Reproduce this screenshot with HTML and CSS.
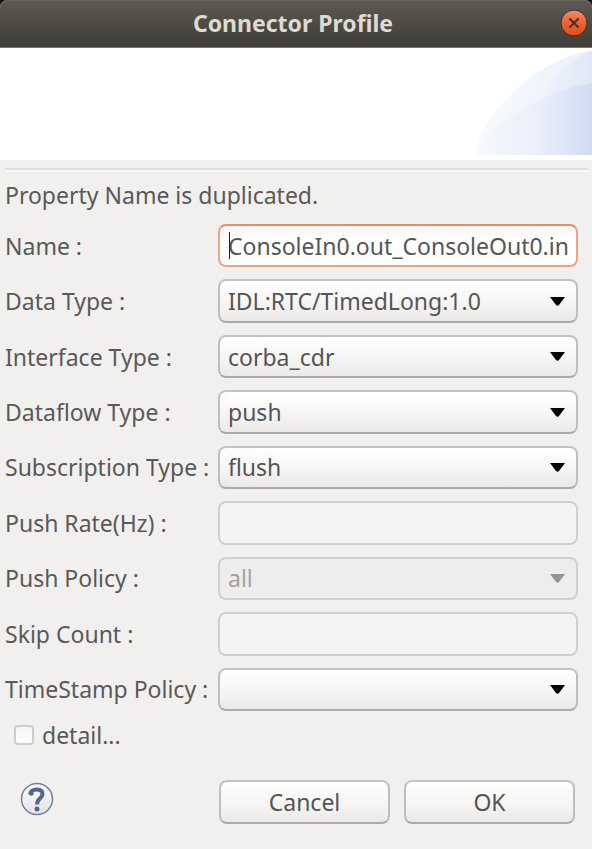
FILE: index.html
```html
<!DOCTYPE html>
<html lang="en">
<head>
<meta charset="utf-8">
<meta name="viewport" content="width=device-width, initial-scale=1">
<title>Connector Profile</title>
<link rel="stylesheet" href="styles.css">
</head>
<body>
<main class="dialog">
  <header class="titlebar">
    <h1 class="title">Connector Profile</h1>
    <button class="close" type="button" aria-label="Close">
      <svg viewBox="0 0 28 28" width="28" height="28" aria-hidden="true">
        <defs>
          <linearGradient id="closeFill" x1="0" y1="0" x2="0" y2="1">
            <stop offset="0" stop-color="#f58a68"/>
            <stop offset="0.5" stop-color="#ee6236"/>
            <stop offset="1" stop-color="#df4c18"/>
          </linearGradient>
        </defs>
        <circle cx="14" cy="14" r="13" fill="url(#closeFill)" stroke="#37332d" stroke-width="1"/>
        <path d="M9.5 9.5L18.5 18.5M18.5 9.5L9.5 18.5" stroke="#4b3218" stroke-width="2" fill="none"/>
      </svg>
    </button>
  </header>
  <div class="banner">
    <svg class="banner-art" viewBox="0 0 116 107" width="116" height="107" aria-hidden="true">
      <defs>
        <linearGradient id="outer" x1="0" y1="0" x2="1" y2="0">
          <stop offset="0" stop-color="#f8fbfd"/>
          <stop offset="1" stop-color="#ebf0fb"/>
        </linearGradient>
        <linearGradient id="wedge" x1="0" y1="0" x2="1" y2="0">
          <stop offset="0" stop-color="#f0f4fc"/>
          <stop offset="1" stop-color="#dfe7f7"/>
        </linearGradient>
        <linearGradient id="inner" x1="0" y1="0" x2="1" y2="0">
          <stop offset="0" stop-color="#f7fafd"/>
          <stop offset="0.55" stop-color="#e9eefa"/>
          <stop offset="1" stop-color="#d1dcf3"/>
        </linearGradient>
      </defs>
      <path d="M0 107C1 82 20 60 44 38C65 20 90 6 116 2V107Z" fill="url(#outer)"/>
      <path d="M62 52C78 30 94 10 116 3V40Z" fill="url(#wedge)"/>
      <path d="M0 107C2 93 12 84 26 75C52 57 82 40 116 35V107Z" fill="url(#inner)"/>
    </svg>
  </div>
  <hr class="separator">
  <p class="message">Property Name is duplicated.</p>
  <form class="form">
    <div class="fields">
      <label for="name">Name :</label>
      <div class="name-field">
        <input class="control focused" id="name" type="text" value="ConsoleIn0.out_ConsoleOut0.in">
        <span class="caret"></span>
      </div>
      <label for="data-type">Data Type :</label>
      <select class="control" id="data-type"><option>IDL:RTC/TimedLong:1.0</option></select>
      <label for="interface-type">Interface Type :</label>
      <select class="control" id="interface-type"><option>corba_cdr</option></select>
      <label for="dataflow-type">Dataflow Type :</label>
      <select class="control" id="dataflow-type"><option>push</option></select>
      <label for="subscription-type">Subscription Type :</label>
      <select class="control" id="subscription-type"><option>flush</option></select>
      <label for="push-rate">Push Rate(Hz) :</label>
      <input class="control" id="push-rate" type="text" disabled>
      <label for="push-policy">Push Policy :</label>
      <select class="control" id="push-policy" disabled><option>all</option></select>
      <label for="skip-count">Skip Count :</label>
      <input class="control" id="skip-count" type="text" disabled>
      <label for="timestamp-policy">TimeStamp Policy :</label>
      <select class="control" id="timestamp-policy"><option></option></select>
    </div>
    <div class="detail">
      <input class="check" id="detail" type="checkbox">
      <label for="detail">detail...</label>
    </div>
    <div class="actions">
      <button class="help" type="button" aria-label="Help">
        <svg viewBox="0 0 34 34" width="34" height="34" aria-hidden="true">
          <defs>
            <linearGradient id="helpFill" x1="0" y1="0" x2="0" y2="1">
              <stop offset="0" stop-color="#fbfbfb"/>
              <stop offset="1" stop-color="#e3e3e3"/>
            </linearGradient>
          </defs>
          <circle cx="17" cy="17" r="15.5" fill="url(#helpFill)" stroke="#70809f" stroke-width="1.5"/>
          <path d="M10 12.500C10.500 8.500 13 7.500 17 7.500C21 7.500 22.500 9.500 22.500 12C22.500 16.500 17 16 17 22.500" fill="none" stroke="#53678f" stroke-width="4"/>
          <circle cx="11.500" cy="11.500" r="2.200" fill="#53678f"/>
          <circle cx="17" cy="27" r="2.500" fill="#53678f"/>
        </svg>
      </button>
      <button class="push" type="button">Cancel</button>
      <button class="push" type="submit">OK</button>
    </div>
  </form>
</main>
</body>
</html>
```
FILE: styles.css
```css
* {
  box-sizing: border-box;
}

body {
  margin: 0;
  background: #15130f;
  color: #595959;
  font: 23px/30px "Noto Sans", sans-serif;
}

.dialog {
  display: flex;
  flex-direction: column;
  min-height: 100vh;
  background: #f1f0ee;
  border-radius: 8px 8px 0 0;
}

.titlebar {
  display: grid;
  grid-template-columns: 22px 1fr 28px;
  align-items: center;
  height: 48px;
  padding: 0 4px 2px;
  border-bottom: 1px solid #77756f;
  border-radius: 8px 8px 0 0;
  background: linear-gradient(#5d5a52, #3d3c37);
  box-shadow: inset 0 1px #69665d;
}

.title {
  grid-column: 2;
  margin: 0;
  color: #dfdbd2;
  font-size: 23px;
  font-weight: 700;
  text-align: center;
}

.close,
.help {
  display: block;
  padding: 0;
  border: 0;
  background: none;
}

.close svg,
.help svg {
  display: block;
}

.banner {
  display: flex;
  justify-content: flex-end;
  height: 112px;
  background: #fff;
}

.separator {
  align-self: stretch;
  height: 4px;
  margin: 8px 4px 0 5px;
  border: 0;
  border-top: 2px solid #e0dfdd;
  border-bottom: 2px solid #f9f9f8;
}

.message {
  margin: 8px 5px 0;
}

.form {
  display: flex;
  flex: 1;
  flex-direction: column;
  margin-top: 14px;
}

.fields {
  display: grid;
  flex: 1;
  grid-template-columns: 204px 1fr;
  grid-auto-rows: 1fr;
  gap: 12px 9px;
  align-items: center;
  padding: 0 14px 0 5px;
}

.fields label {
  white-space: nowrap;
}

.name-field {
  position: relative;
  height: 100%;
}

.control {
  display: block;
  width: 100%;
  height: 100%;
  min-height: 43px;
  min-width: 0;
  margin: 0;
  padding: 0 8px;
  border: 2px solid #b9b8b5;
  border-radius: 8px;
  outline: 0;
  background: linear-gradient(#fff, #f6f5f4 55%, #eae9e7);
  color: #555;
  font: inherit;
  appearance: none;
}

select.control {
  padding-right: 36px;
  border-color: #c4c3c1 #bfbebc #acaba8;
  background-image: url("data:image/svg+xml,%3Csvg xmlns='http://www.w3.org/2000/svg' width='15' height='9'%3E%3Cpath d='M0 0H15L9 8Q7.500 9.500 6 8Z' fill='%23000'/%3E%3C/svg%3E"), linear-gradient(#fff, #f6f5f4 55%, #eae9e7);
  background-position: right 11px center, 0 0;
  background-repeat: no-repeat;
}

.control.focused {
  border-color: #ec8a66 #f0a288 #f0a288;
  background: linear-gradient(#f6f6f6, #fff 40%);
}

.control:disabled {
  border-color: #d0cfcd;
  background: #f4f4f4;
  opacity: 1;
}

select.control:disabled {
  background: url("data:image/svg+xml,%3Csvg xmlns='http://www.w3.org/2000/svg' width='15' height='9'%3E%3Cpath d='M0 0H15L9 8Q7.500 9.500 6 8Z' fill='%2398938d'/%3E%3C/svg%3E") right 11px center no-repeat #ededed;
  color: #a5a29e;
}

.caret {
  position: absolute;
  top: 8px;
  bottom: 8px;
  left: 11px;
  width: 1px;
  background: #222;
}

.detail {
  display: flex;
  align-items: center;
  gap: 8px;
  margin-top: 9px;
  padding: 0 14px;
}

.check {
  width: 20px;
  height: 20px;
  margin: 0;
  border: 2px solid #cdccca;
  border-radius: 4px;
  background: linear-gradient(#f4f4f4, #fff);
  appearance: none;
}

.actions {
  display: grid;
  grid-template-columns: 185px 1fr 1fr;
  gap: 14px;
  align-items: center;
  margin-top: 30px;
  padding: 0 17px 25px 20px;
}

.help {
  align-self: start;
  justify-self: start;
  margin-top: 2px;
}

.push {
  height: 44px;
  padding: 0 10px;
  border: 2px solid;
  border-color: #c4c3c1 #bfbebc #acaba8;
  border-radius: 8px;
  background: linear-gradient(#fff, #f6f5f4 55%, #eae9e7);
  color: #555;
  font: inherit;
}
```
